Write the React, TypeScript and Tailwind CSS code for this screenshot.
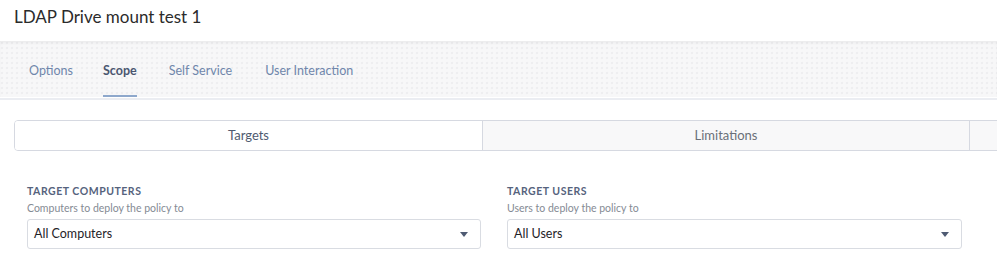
import React from "react";

const font = { fontFamily: "Lato, 'Open Sans', 'Liberation Sans', sans-serif" };

function Caret() {
  return (
    <svg width="8" height="5" viewBox="0 0 8 5" className="shrink-0">
      <path d="M0 0 H8 L4 5 Z" fill="#4f5b73" />
    </svg>
  );
}

function Field({ label, sub, value }: { label: string; sub: string; value: string }) {
  return (
    <div className="flex flex-col">
      <div className="text-[10.5px] font-bold tracking-[0.05em] text-[#56637d] leading-[14px]">{label}</div>
      <div className="mt-[2px] text-[10.5px] text-[#858b94] leading-[16px]">{sub}</div>
      <div className="mt-[3px] h-[30px] flex items-center justify-between rounded-[3px] border border-[#d9dce2] bg-white pl-[6px] pr-[12px]">
        <span className="text-[12.5px] text-[#1f2328]">{value}</span>
        <Caret />
      </div>
    </div>
  );
}

export default function App() {
  return (
    <div className="w-[997px] h-[273px] overflow-hidden bg-white" style={font}>
      <div className="h-[41px] pl-[14px] pt-[5px]">
        <h1 className="text-[17px] leading-[24px] text-[#2b2b2b] font-normal">LDAP Drive mount test 1</h1>
      </div>
      <div className="h-[56px] bg-[#f7f7f8] bg-[radial-gradient(circle_at_2px_2px,#eeeef0_1px,transparent_1.6px)] bg-[length:5px_5px] shadow-[inset_0_3px_4px_-2px_rgba(0,0,0,0.07)] flex items-stretch pl-[29px]">
        <div className="flex items-center pt-[5px] text-[12.5px] text-[#6f86ab]">Options</div>
        <div className="relative ml-[30px] flex items-center pt-[5px] text-[12.5px] font-bold text-[#4a5670]">
          Scope
          <div className="absolute left-0 right-0 bottom-0 h-[2px] bg-[#8ea8cc]" />
        </div>
        <div className="ml-[32px] flex items-center pt-[5px] text-[12.5px] text-[#6f86ab]">Self Service</div>
        <div className="ml-[33px] flex items-center pt-[5px] text-[12.5px] text-[#6f86ab]">User Interaction</div>
      </div>
      <div className="h-[1px] bg-white" />
      <div className="h-[2px] bg-[#ebedf2]" />
      <div className="pt-[20px] pl-[14px]">
        <div className="flex h-[31px] w-[1000px] rounded-l-[4px] border border-[#d6d9e1] overflow-hidden">
          <div className="w-[468px] flex items-center justify-center bg-white text-[13px] text-[#4f5a70] border-r border-[#d6d9e1]">Targets</div>
          <div className="w-[487px] flex items-center justify-center bg-[#f8f8f9] text-[13px] text-[#6a6f78] border-r border-[#d6d9e1]">Limitations</div>
          <div className="flex-1 bg-[#f8f8f9]" />
        </div>
      </div>
      <div className="pt-[33px] pl-[27px] grid grid-cols-[454px_455px] gap-[26px]">
        <Field label="TARGET COMPUTERS" sub="Computers to deploy the policy to" value="All Computers" />
        <Field label="TARGET USERS" sub="Users to deploy the policy to" value="All Users" />
      </div>
    </div>
  );
}
